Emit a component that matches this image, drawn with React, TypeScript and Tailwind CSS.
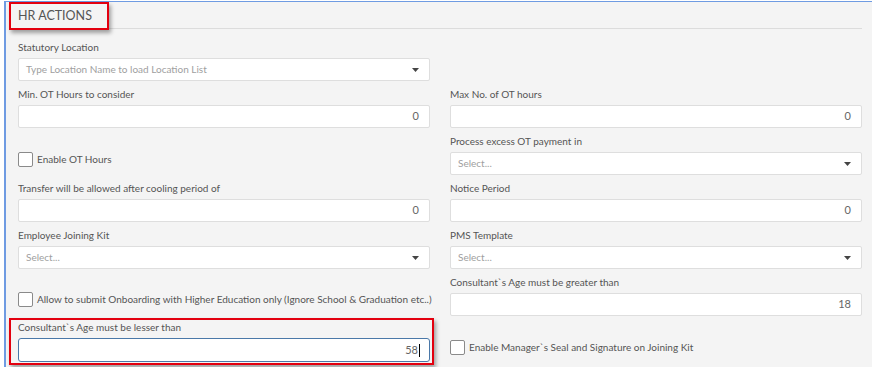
import React from "react";

// HR actions form section, with the two red review markers drawn over it.

const font = { fontFamily: "Lato, 'Open Sans', sans-serif" };

function Caret() {
  return (
    <svg width="7" height="4" viewBox="0 0 7 4" className="shrink-0">
      <path d="M0 0h7L3.5 4z" fill="#444" />
    </svg>
  );
}

function Label({ children }: { children: React.ReactNode }) {
  return <div className="h-[14px] whitespace-nowrap text-[10px] leading-[14px] text-[#555]">{children}</div>;
}

function NumberField({
  label,
  value,
  focused,
  className,
}: {
  label: string;
  value: string;
  focused?: boolean;
  className?: string;
}) {
  return (
    <div className={"flex flex-col gap-[4px] " + (className ?? "")}>
      <Label>{label}</Label>
      <div
        className={
          focused
            ? "flex h-[24px] items-center justify-end rounded-[3px] border border-[#4a78a8] bg-white pr-[9px] text-[11px] text-[#666]"
            : "flex h-[23px] items-center justify-end rounded-[2px] border border-[#dedede] bg-white pr-[10px] text-[11px] text-[#666]"
        }
      >
        {value}
        {focused && <span className="ml-[1px] h-[13px] w-px bg-black" />}
      </div>
    </div>
  );
}

function SelectField({ label, placeholder = "Select..." }: { label?: string; placeholder?: string }) {
  return (
    <div className="flex flex-col gap-[4px]">
      {label && <Label>{label}</Label>}
      <div className="flex h-[23px] items-center justify-between rounded-[2px] border border-[#dedede] bg-white pl-[7px] pr-[10px] text-[10px] text-[#a0a0a0]">
        <span>{placeholder}</span>
        <Caret />
      </div>
    </div>
  );
}

function Check({ label, className }: { label: string; className?: string }) {
  return (
    <div className={"flex h-[41px] items-start gap-[4px] " + (className ?? "")}>
      <span className="h-[15px] w-[15px] shrink-0 rounded-[2px] border border-[#8a8a8a] bg-white" />
      <span className="whitespace-nowrap text-[10px] leading-[15px] text-[#555]">{label}</span>
    </div>
  );
}

function Marker({ className }: { className: string }) {
  return (
    <div
      className={
        "pointer-events-none absolute border-2 border-[#e3000f] shadow-[2px_3px_4px_rgba(0,0,0,0.35)] " + className
      }
    />
  );
}

export default function App() {
  return (
    <div className="h-[367px] w-[872px] overflow-hidden bg-white pl-[4px] pt-[1px]" style={font}>
      <div className="relative h-full border-l-2 border-t border-[#6f9be2] bg-[#f4f4f4] pt-[5px]">
        <div className="pl-[12px] text-[12.5px] leading-[18px] text-[#555]">HR ACTIONS</div>
        <div className="ml-[3px] mr-[10px] mt-[3px] h-px bg-[#dcdcdc]" />

        <div className="grid grid-cols-2 gap-x-[20px] gap-y-[6px] pl-[12px] pr-[10px] pt-[11px]">
          <SelectField label="Statutory Location" placeholder="Type Location Name to load Location List" />
          <div />

          <NumberField label="Min. OT Hours to consider" value="0" />
          <NumberField label="Max No. of OT hours" value="0" />

          <Check label="Enable OT Hours" className="pt-[18px]" />
          <SelectField label="Process excess OT payment in" />

          <NumberField label="Transfer will be allowed after cooling period of" value="0" />
          <NumberField label="Notice Period" value="0" />

          <SelectField label="Employee Joining Kit" />
          <SelectField label="PMS Template" />

          <Check
            label="Allow to submit Onboarding with Higher Education only (Ignore School & Graduation etc..)"
            className="pt-[17px]"
          />
          <NumberField label="Consultant`s Age must be greater than" value="18" />

          <NumberField label="Consultant`s Age must be lesser than" value="58" focused className="-mt-[2px]" />
          <Check label="Enable Manager`s Seal and Signature on Joining Kit" className="-mt-[2px] pt-[20px]" />
        </div>

        <Marker className="left-[3px] top-0 h-[28px] w-[100px]" />
        <Marker className="left-[3px] top-[316px] h-[47px] w-[425px]" />
      </div>
    </div>
  );
}
